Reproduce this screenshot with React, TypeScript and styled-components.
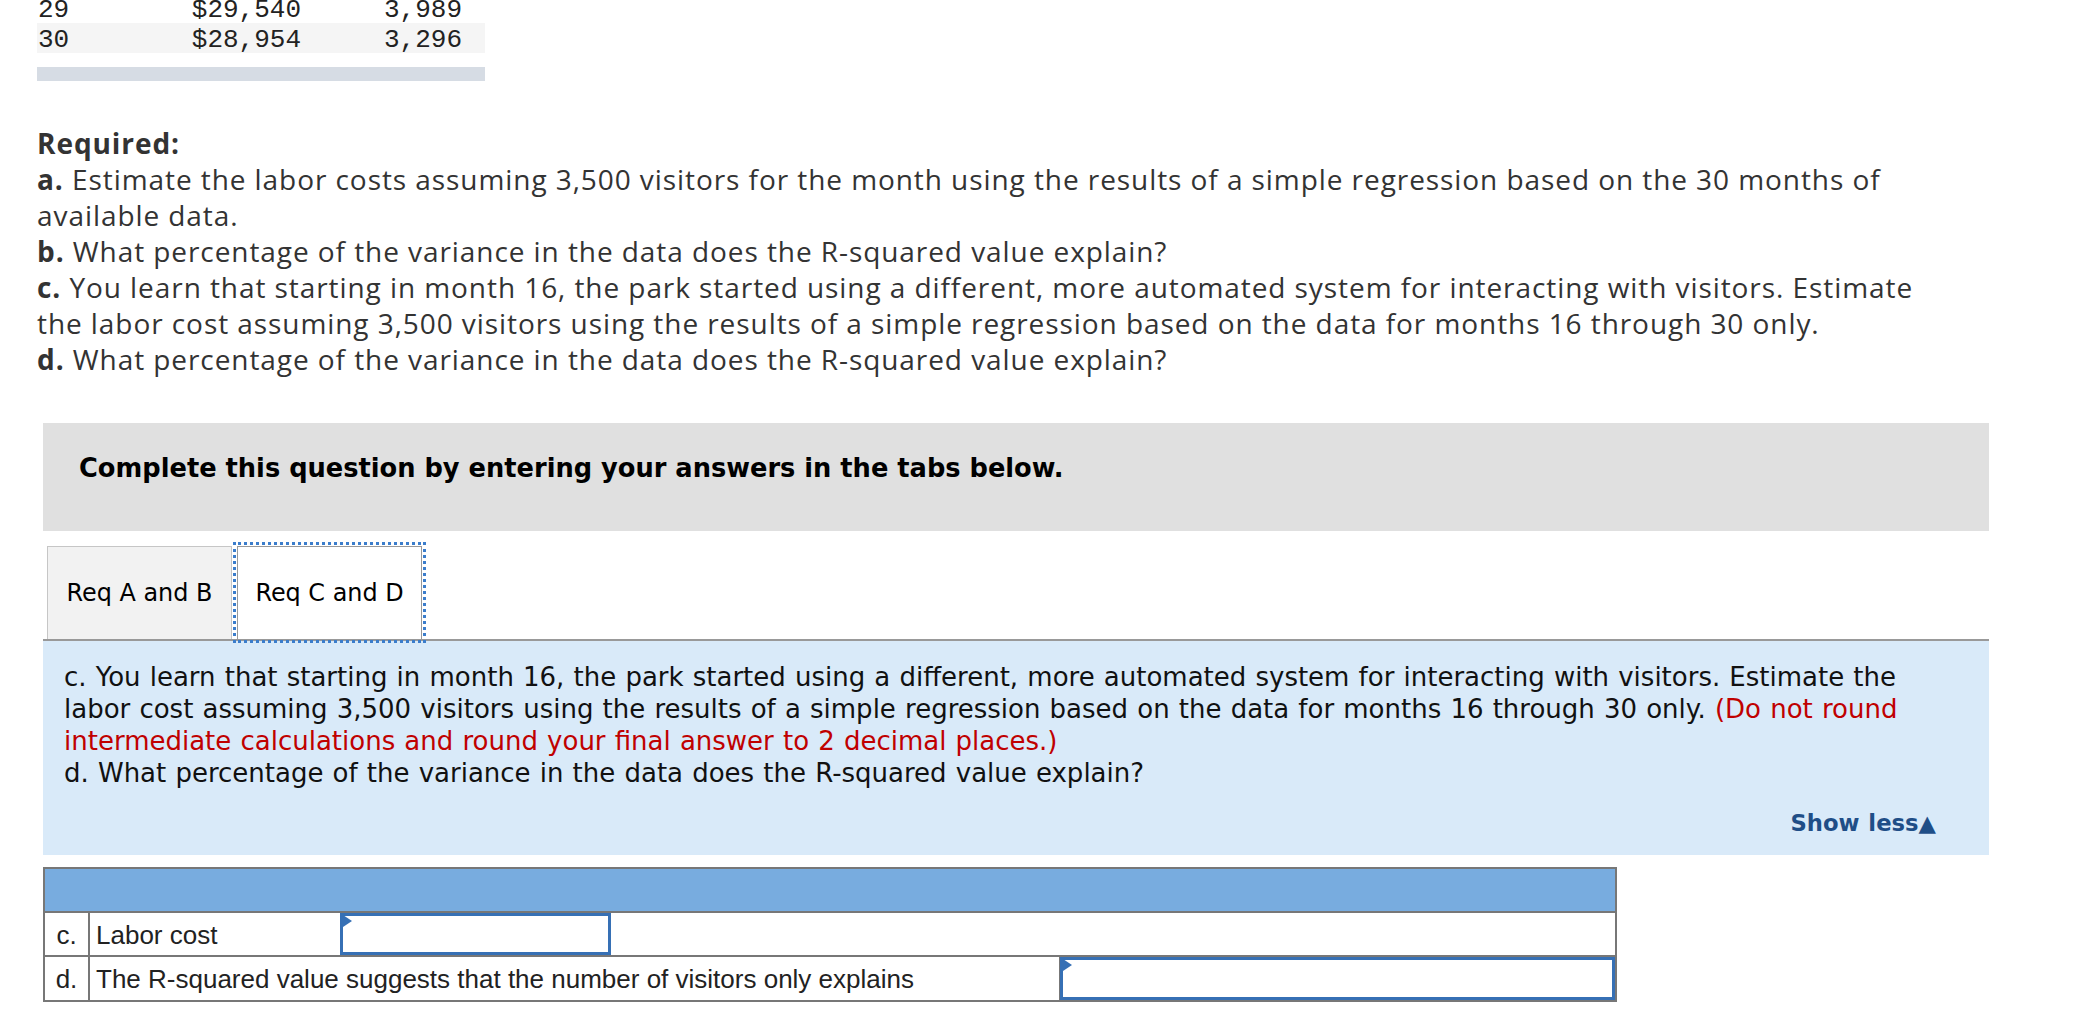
import React from "react";
import styled, { createGlobalStyle } from "styled-components";

const GlobalStyle = createGlobalStyle`
  html, body { margin: 0; padding: 0; background: #ffffff; }
  body { font-family: "DejaVu Sans", Verdana, sans-serif; }
`;

const Page = styled.div`
  padding-left: 37px;
  width: 2078px;
  box-sizing: border-box;
`;

const DataTable = styled.div`
  margin-top: -7px;
  width: 448px;
  font-family: "Liberation Mono", "DejaVu Sans Mono", monospace;
  font-size: 26px;
  color: #222;
`;

const DataRow = styled.div<{ $shaded?: boolean }>`
  display: grid;
  grid-template-columns: 113px 150px 161px;
  box-sizing: border-box;
  padding: 4px 24px 0 1px;
  height: 30px;
  line-height: 26px;
  background: ${(p) => (p.$shaded ? "#f5f5f5" : "transparent")};
`;

const DataCell = styled.span<{ $right?: boolean }>`
  text-align: ${(p) => (p.$right ? "right" : "left")};
  white-space: pre;
`;

const GrayBar = styled.div`
  margin-top: 14px;
  width: 448px;
  height: 14px;
  background: #d6dce4;
`;

const Required = styled.div`
  margin-top: 44px;
  font-family: "Open Sans", "Noto Sans", sans-serif;
  font-size: 28px;
  letter-spacing: 0.93px;
  line-height: 36px;
  color: #333;
`;

const RLine = styled.span`
  display: block;
  white-space: nowrap;
  width: max-content;
`;

const Strong = styled.b`
  font-weight: 700;
`;

const Question = styled.div`
  margin-top: 46px;
  margin-left: 6px;
  width: 1946px;
`;

const Instruction = styled.div`
  box-sizing: border-box;
  height: 108px;
  padding: 29px 36px 0;
  background: #e0e0e0;
  font-family: "DejaVu Sans", Verdana, sans-serif;
  font-weight: 700;
  font-size: 25.7px;
  line-height: 32px;
  color: #000;
  white-space: nowrap;
`;

const TabBar = styled.div`
  margin-top: 10px;
  display: flex;
  align-items: flex-end;
  gap: 5px;
  padding: 5px 0 0 4px;
  border-bottom: 2px solid #999;
`;

const Tab = styled.div<{ $active?: boolean }>`
  box-sizing: border-box;
  width: 185px;
  height: 93px;
  display: flex;
  align-items: center;
  justify-content: center;
  border: 1px solid ${(p) => (p.$active ? "#999" : "#c6c6c6")};
  border-bottom: none;
  background: ${(p) => (p.$active ? "#ffffff" : "#f2f2f2")};
  outline: ${(p) => (p.$active ? "3px dotted #3b7dcb" : "none")};
  outline-offset: 1px;
  font-family: "DejaVu Sans", Verdana, sans-serif;
  font-size: 23.9px;
  color: #000;
  white-space: nowrap;
  cursor: pointer;
`;

const Panel = styled.div`
  box-sizing: border-box;
  height: 214px;
  padding: 20px 53px 0 21px;
  background: #d9eaf9;
  display: flex;
  flex-direction: column;
  font-family: "DejaVu Sans", Verdana, sans-serif;
  font-size: 26px;
  word-spacing: 0.9px;
  line-height: 32px;
  color: #111;
`;

const PLine = styled.span`
  display: block;
  white-space: nowrap;
  width: max-content;
`;

const Red = styled.span`
  color: #c00000;
`;

const ShowLess = styled.span`
  align-self: flex-end;
  margin-top: 18px;
  font-family: "DejaVu Sans", Verdana, sans-serif;
  font-weight: 700;
  font-size: 22.7px;
  line-height: 32px;
  color: #1f4e87;
  white-space: nowrap;
  cursor: pointer;
`;

const AnswerTable = styled.div`
  margin-top: 12px;
  width: 1574px;
  box-sizing: border-box;
  border: 2px solid #777;
  display: grid;
  grid-template-columns: 45px 250px 271px 449px 555px;
  grid-template-rows: 44px 44px 43px;
  font-family: "Liberation Sans", Arial, sans-serif;
  font-size: 26px;
  color: #222;
`;

const HeaderCell = styled.div`
  grid-column: 1 / -1;
  background: #78acdf;
  border-bottom: 2px solid #777;
`;

const LetterCell = styled.div<{ $last?: boolean }>`
  display: flex;
  align-items: center;
  justify-content: center;
  padding-top: 2px;
  border-right: 2px solid #777;
  border-bottom: ${(p) => (p.$last ? "none" : "2px solid #777")};
`;

const TextCell = styled.div<{ $span: string; $last?: boolean }>`
  grid-column: ${(p) => p.$span};
  display: flex;
  align-items: center;
  padding: 2px 0 0 6px;
  white-space: nowrap;
  border-bottom: ${(p) => (p.$last ? "none" : "2px solid #777")};
  border-right: ${(p) => (p.$last ? "1px solid #777" : "none")};
`;

const EmptyCell = styled.div<{ $span: string }>`
  grid-column: ${(p) => p.$span};
  border-bottom: 2px solid #777;
`;

const InputCell = styled.div<{ $last?: boolean }>`
  position: relative;
  border-bottom: ${(p) => (p.$last ? "none" : "2px solid #777")};
`;

const AnswerInput = styled.input`
  display: block;
  box-sizing: border-box;
  width: 100%;
  height: 100%;
  margin: 0;
  border: 3px solid #3670b5;
  background: #fff;
  outline: none;
`;

const Marker = styled.span`
  position: absolute;
  left: 3px;
  top: 2px;
  width: 0;
  height: 0;
  border-top: 6px solid transparent;
  border-bottom: 6px solid transparent;
  border-left: 9px solid #3670b5;
`;

const dataRows = [
  { month: "29", cost: "$29,540", visitors: "3,989" },
  { month: "30", cost: "$28,954", visitors: "3,296" },
];

export default function App() {
  return (
    <>
      <GlobalStyle />
      <Page>
        <DataTable>
          {dataRows.map((row, i) => (
            <DataRow key={row.month} $shaded={i % 2 === 1}>
              <DataCell>{row.month}</DataCell>
              <DataCell $right>{row.cost}</DataCell>
              <DataCell $right>{row.visitors}</DataCell>
            </DataRow>
          ))}
        </DataTable>
        <GrayBar />
        <Required>
          <RLine>
            <Strong>Required:</Strong>
          </RLine>
          <RLine>
            <Strong>a.</Strong> Estimate the labor costs assuming 3,500 visitors for the month using the results of a simple regression based on the 30 months of
          </RLine>
          <RLine>available data.</RLine>
          <RLine>
            <Strong>b.</Strong> What percentage of the variance in the data does the R-squared value explain?
          </RLine>
          <RLine>
            <Strong>c.</Strong> You learn that starting in month 16, the park started using a different, more automated system for interacting with visitors. Estimate
          </RLine>
          <RLine>
            the labor cost assuming 3,500 visitors using the results of a simple regression based on the data for months 16 through 30 only.
          </RLine>
          <RLine>
            <Strong>d.</Strong> What percentage of the variance in the data does the R-squared value explain?
          </RLine>
        </Required>
        <Question>
          <Instruction>Complete this question by entering your answers in the tabs below.</Instruction>
          <TabBar>
            <Tab>Req A and B</Tab>
            <Tab $active>Req C and D</Tab>
          </TabBar>
          <Panel>
            <PLine>
              c. You learn that starting in month 16, the park started using a different, more automated system for interacting with visitors. Estimate the
            </PLine>
            <PLine>
              labor cost assuming 3,500 visitors using the results of a simple regression based on the data for months 16 through 30 only. <Red>(Do not round</Red>
            </PLine>
            <PLine>
              <Red>intermediate calculations and round your final answer to 2 decimal places.)</Red>
            </PLine>
            <PLine>d. What percentage of the variance in the data does the R-squared value explain?</PLine>
            <ShowLess>Show less▲</ShowLess>
          </Panel>
          <AnswerTable>
            <HeaderCell />
            <LetterCell>c.</LetterCell>
            <TextCell $span="2 / 3">Labor cost</TextCell>
            <InputCell>
              <AnswerInput type="text" aria-label="Labor cost" />
              <Marker />
            </InputCell>
            <EmptyCell $span="4 / 6" />
            <LetterCell $last>d.</LetterCell>
            <TextCell $span="2 / 5" $last>
              The R-squared value suggests that the number of visitors only explains
            </TextCell>
            <InputCell $last>
              <AnswerInput type="text" aria-label="R-squared percentage" />
              <Marker />
            </InputCell>
          </AnswerTable>
        </Question>
      </Page>
    </>
  );
}
